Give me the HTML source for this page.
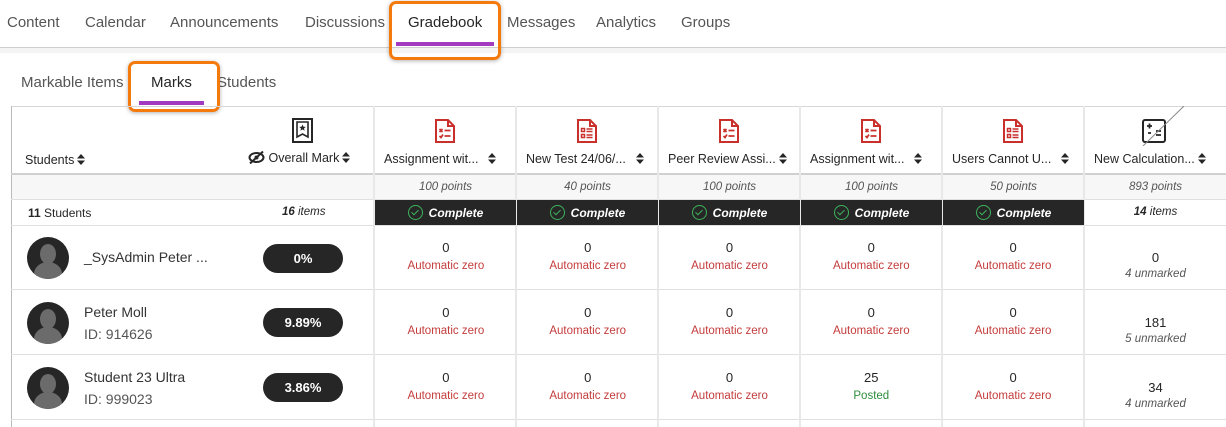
<!DOCTYPE html>
<html><head><meta charset="utf-8"><style>
*{margin:0;padding:0;box-sizing:border-box}
body{width:1226px;height:427px;overflow:hidden;background:#fff;font-family:"Liberation Sans",sans-serif;color:#262626;position:relative}
.a{position:absolute}
.nav{font-size:15px;color:#555;top:14px;white-space:nowrap}
.sub{font-size:15px;color:#555;top:74px}
.t{font-size:12.5px;color:#262626;white-space:nowrap}
.c{text-align:center}
.i{font-style:italic;font-size:11.5px;color:#555}
.hl{position:absolute;height:1px;background:#e0e0e0}
.vl{position:absolute;width:2px;background:#e8e8e8}
.cmp{position:absolute;top:200px;height:25px;width:141px;background:#262626;color:#fff;font-style:italic;font-weight:bold;font-size:12px;display:flex;align-items:center;justify-content:center;gap:6px}
.ck{width:15px;height:15px;border:1.5px solid #3cb35c;border-radius:50%;position:relative}
.ck:after{content:"";position:absolute;left:4px;top:1.5px;width:3px;height:6px;border:solid #3cb35c;border-width:0 1.5px 1.5px 0;transform:rotate(45deg)}
.num{font-size:13px;color:#262626}
.az{font-size:11.5px;color:#c43c3c}
.pill{position:absolute;left:263px;width:80px;height:29px;border-radius:15px;background:#262626;color:#fff;font-weight:bold;font-size:13px;display:flex;align-items:center;justify-content:center}
.av{position:absolute;left:27px;width:42px;height:42px;border-radius:50%;background:#262626;overflow:hidden}
.av:before{content:"";position:absolute;left:13px;top:7px;width:16px;height:20px;border-radius:50%;background:#6b6b6b}
.av:after{content:"";position:absolute;left:7px;top:25px;width:28px;height:24px;border-radius:50% 50% 0 0;background:#6b6b6b}
.nm{position:absolute;left:84px;font-size:14px;color:#333}
.id{position:absolute;left:84px;font-size:14px;color:#555}
.box{position:absolute;border:3px solid #f47a0e;border-radius:7px;box-shadow:0 1px 4px rgba(0,0,0,.3)}
.s{display:inline-block;width:8px;height:11px;vertical-align:-1px;margin-left:3px}
</style></head><body>
<svg width="0" height="0" style="position:absolute"><defs><symbol id="so" viewBox="0 0 8 11"><path d="M0 4.5L4 0l4 4.5zM0 6.5L4 11l4-4.5z" fill="#262626"/></symbol></defs></svg>
<div class="a nav" style="left:7px">Content</div>
<div class="a nav" style="left:85px">Calendar</div>
<div class="a nav" style="left:170px">Announcements</div>
<div class="a nav" style="left:305px">Discussions</div>
<div class="a nav" style="left:408px;color:#262626">Gradebook</div>
<div class="a nav" style="left:507px">Messages</div>
<div class="a nav" style="left:596px">Analytics</div>
<div class="a nav" style="left:681px">Groups</div>
<div class="a" style="left:396px;top:42px;width:98px;height:4px;background:#a23bbf"></div>
<div class="a" style="left:0;top:47px;width:1226px;height:1px;background:#cfcfcf"></div>
<div class="a" style="left:0;top:48px;width:1226px;height:5px;background:#f4f4f4"></div>
<div class="box" style="left:389px;top:1px;width:112px;height:59px"></div>

<div class="a sub" style="left:21px">Markable Items</div>
<div class="a sub" style="left:151px;color:#262626">Marks</div>
<div class="a sub" style="left:217px">Students</div>
<div class="a" style="left:139px;top:101px;width:65px;height:4px;background:#a23bbf"></div>
<div class="box" style="left:128px;top:61px;width:92px;height:51px"></div>

<div class="hl" style="left:11px;top:106px;width:1215px;background:#d6d6d6"></div>
<div class="a" style="left:11px;top:106px;width:1px;height:321px;background:#bbb"></div>
<div class="hl" style="left:11px;top:173px;width:1215px;background:#d0d0d0;height:2px"></div>
<div class="a" style="left:12px;top:175px;width:1214px;height:24px;background:#f7f7f7"></div>
<div class="hl" style="left:11px;top:199px;width:1215px"></div>
<div class="hl" style="left:11px;top:225px;width:1215px"></div>
<div class="hl" style="left:11px;top:289px;width:1215px"></div>
<div class="hl" style="left:11px;top:354px;width:1215px"></div>
<div class="hl" style="left:11px;top:419px;width:1215px"></div>
<div class="vl" style="left:373px;top:106px;height:321px"></div>
<div class="vl" style="left:515px;top:106px;height:321px"></div>
<div class="vl" style="left:657px;top:106px;height:321px"></div>
<div class="vl" style="left:799px;top:106px;height:321px"></div>
<div class="vl" style="left:941px;top:106px;height:321px"></div>
<div class="vl" style="left:1083px;top:106px;height:321px"></div>

<div class="a t" style="left:25px;top:153px">Students<svg class="s"><use href="#so"/></svg></div>
<div class="a t" style="left:248px;top:151px"><svg width="17" height="13" viewBox="0 0 17 13" style="vertical-align:-2px"><ellipse cx="8.5" cy="6.5" rx="7" ry="4.5" fill="none" stroke="#262626" stroke-width="2"/><circle cx="8.5" cy="6.5" r="2" fill="#262626"/><line x1="2" y1="12.5" x2="15" y2="0.5" stroke="#262626" stroke-width="2"/></svg> Overall Mark<svg class="s"><use href="#so"/></svg></div>
<svg class="a" style="left:292px;top:118px" width="21" height="25" viewBox="0 0 21 25"><rect x="1" y="1" width="19" height="23" fill="none" stroke="#262626" stroke-width="2"/><path d="M5 4h11v15l-5.5-3-5.5 3z" fill="none" stroke="#262626" stroke-width="1.6"/><path d="M10.5 6.5l1 2.2 2.3.2-1.8 1.5.6 2.3-2.1-1.3-2.1 1.3.6-2.3-1.8-1.5 2.3-.2z" fill="#262626"/></svg>

<div class="a i" style="left:28px;top:206px;font-style:normal;font-size:12px;color:#262626"><b>11</b> Students</div>
<div class="a i" style="left:282px;top:206px;color:#262626"><b>16</b> items</div>
<div class="a i c" style="left:375px;width:141px;top:181px">100 points</div>
<div class="a i c" style="left:517px;width:141px;top:181px">40 points</div>
<div class="a i c" style="left:659px;width:141px;top:181px">100 points</div>
<div class="a i c" style="left:801px;width:141px;top:181px">100 points</div>
<div class="a i c" style="left:943px;width:141px;top:181px">50 points</div>
<div class="a i c" style="left:1085px;width:141px;top:181px">893 points</div>
<div class="cmp" style="left:375px"><span class="ck"></span>Complete</div>
<div class="cmp" style="left:517px"><span class="ck"></span>Complete</div>
<div class="cmp" style="left:659px"><span class="ck"></span>Complete</div>
<div class="cmp" style="left:801px"><span class="ck"></span>Complete</div>
<div class="cmp" style="left:943px"><span class="ck"></span>Complete</div>
<div class="a i c" style="left:1085px;width:141px;top:206px;color:#262626"><b>14</b> items</div>

<div class="a t" style="left:384px;top:152px">Assignment wit...<svg class="s" style="margin-left:10px"><use href="#so"/></svg></div>
<div class="a t" style="left:526px;top:152px">New Test 24/06/...<svg class="s" style="margin-left:10px"><use href="#so"/></svg></div>
<div class="a t" style="left:668px;top:152px">Peer Review Assi...<svg class="s"><use href="#so"/></svg></div>
<div class="a t" style="left:810px;top:152px">Assignment wit...<svg class="s" style="margin-left:10px"><use href="#so"/></svg></div>
<div class="a t" style="left:952px;top:152px">Users Cannot U...<svg class="s" style="margin-left:10px"><use href="#so"/></svg></div>
<div class="a t" style="left:1094px;top:152px">New Calculation...<svg class="s"><use href="#so"/></svg></div>

<svg class="a" style="left:435px;top:119px" width="20" height="24" viewBox="0 0 20 24"><path d="M1 1h12l6 6v16H1z M13 1v6h6" fill="none" stroke="#c9302c" stroke-width="2"/><path d="M4.5 10l3 3M7.5 10l-3 3M9.5 11.5h6M4.5 17l1.5 1.5 2-3M9.5 17h6" stroke="#c9302c" stroke-width="1.7" fill="none"/></svg>
<svg class="a" style="left:577px;top:119px" width="20" height="24" viewBox="0 0 20 24"><path d="M1 1h12l6 6v16H1z M13 1v6h6" fill="none" stroke="#c9302c" stroke-width="2"/><rect x="4.5" y="9.5" width="3" height="3" fill="none" stroke="#c9302c" stroke-width="1.5"/><rect x="4.5" y="15.5" width="3" height="3" fill="none" stroke="#c9302c" stroke-width="1.5"/><path d="M9.5 10h6M9.5 12.5h6M9.5 16h6M9.5 18.5h6" stroke="#c9302c" stroke-width="1.5"/></svg>
<svg class="a" style="left:719px;top:119px" width="20" height="24" viewBox="0 0 20 24"><path d="M1 1h12l6 6v16H1z M13 1v6h6" fill="none" stroke="#c9302c" stroke-width="2"/><path d="M4.5 10l3 3M7.5 10l-3 3M9.5 11.5h6M4.5 17l1.5 1.5 2-3M9.5 17h6" stroke="#c9302c" stroke-width="1.7" fill="none"/></svg>
<svg class="a" style="left:861px;top:119px" width="20" height="24" viewBox="0 0 20 24"><path d="M1 1h12l6 6v16H1z M13 1v6h6" fill="none" stroke="#c9302c" stroke-width="2"/><path d="M4.5 10l3 3M7.5 10l-3 3M9.5 11.5h6M4.5 17l1.5 1.5 2-3M9.5 17h6" stroke="#c9302c" stroke-width="1.7" fill="none"/></svg>
<svg class="a" style="left:1003px;top:119px" width="20" height="24" viewBox="0 0 20 24"><path d="M1 1h12l6 6v16H1z M13 1v6h6" fill="none" stroke="#c9302c" stroke-width="2"/><rect x="4.5" y="9.5" width="3" height="3" fill="none" stroke="#c9302c" stroke-width="1.5"/><rect x="4.5" y="15.5" width="3" height="3" fill="none" stroke="#c9302c" stroke-width="1.5"/><path d="M9.5 10h6M9.5 12.5h6M9.5 16h6M9.5 18.5h6" stroke="#c9302c" stroke-width="1.5"/></svg>
<svg class="a" style="left:1130px;top:106px" width="56" height="40" viewBox="0 0 56 40"><rect x="13" y="14" width="22" height="22" rx="2" fill="none" stroke="#262626" stroke-width="2"/><path d="M17 20h5M19.5 17.5v5M18 27l3 0M26 25h5M26 29h5" stroke="#262626" stroke-width="1.8"/><line x1="13" y1="40" x2="54" y2="0" stroke="#888" stroke-width="1"/></svg>

<div class="av" style="top:237px"></div>
<div class="nm" style="top:249px">_SysAdmin Peter ...</div>
<div class="pill" style="top:244px">0%</div>
<div class="av" style="top:302px"></div>
<div class="nm" style="top:304px">Peter Moll</div>
<div class="id" style="top:326px">ID: 914626</div>
<div class="pill" style="top:308px">9.89%</div>
<div class="av" style="top:367px"></div>
<div class="nm" style="top:369px">Student 23 Ultra</div>
<div class="id" style="top:391px">ID: 999023</div>
<div class="pill" style="top:373px">3.86%</div>

<div class="a c" style="left:375px;width:709px;top:240px;display:flex">
<div style="width:142px"><div class="num">0</div><div class="az" style="margin-top:5px">Automatic zero</div></div>
<div style="width:142px"><div class="num">0</div><div class="az" style="margin-top:5px">Automatic zero</div></div>
<div style="width:142px"><div class="num">0</div><div class="az" style="margin-top:5px">Automatic zero</div></div>
<div style="width:142px"><div class="num">0</div><div class="az" style="margin-top:5px">Automatic zero</div></div>
<div style="width:142px"><div class="num">0</div><div class="az" style="margin-top:5px">Automatic zero</div></div>
</div>
<div class="a c" style="left:375px;width:709px;top:305px;display:flex">
<div style="width:142px"><div class="num">0</div><div class="az" style="margin-top:5px">Automatic zero</div></div>
<div style="width:142px"><div class="num">0</div><div class="az" style="margin-top:5px">Automatic zero</div></div>
<div style="width:142px"><div class="num">0</div><div class="az" style="margin-top:5px">Automatic zero</div></div>
<div style="width:142px"><div class="num">0</div><div class="az" style="margin-top:5px">Automatic zero</div></div>
<div style="width:142px"><div class="num">0</div><div class="az" style="margin-top:5px">Automatic zero</div></div>
</div>
<div class="a c" style="left:375px;width:709px;top:370px;display:flex">
<div style="width:142px"><div class="num">0</div><div class="az" style="margin-top:5px">Automatic zero</div></div>
<div style="width:142px"><div class="num">0</div><div class="az" style="margin-top:5px">Automatic zero</div></div>
<div style="width:142px"><div class="num">0</div><div class="az" style="margin-top:5px">Automatic zero</div></div>
<div style="width:142px"><div class="num">25</div><div class="az" style="margin-top:5px;color:#2e8b3e">Posted</div></div>
<div style="width:142px"><div class="num">0</div><div class="az" style="margin-top:5px">Automatic zero</div></div>
</div>
<div class="a c" style="left:1085px;width:141px;top:250px"><div class="num">0</div><div class="i" style="margin-top:3px">4 unmarked</div></div>
<div class="a c" style="left:1085px;width:141px;top:315px"><div class="num">181</div><div class="i" style="margin-top:3px">5 unmarked</div></div>
<div class="a c" style="left:1085px;width:141px;top:380px"><div class="num">34</div><div class="i" style="margin-top:3px">4 unmarked</div></div>
</body></html>
